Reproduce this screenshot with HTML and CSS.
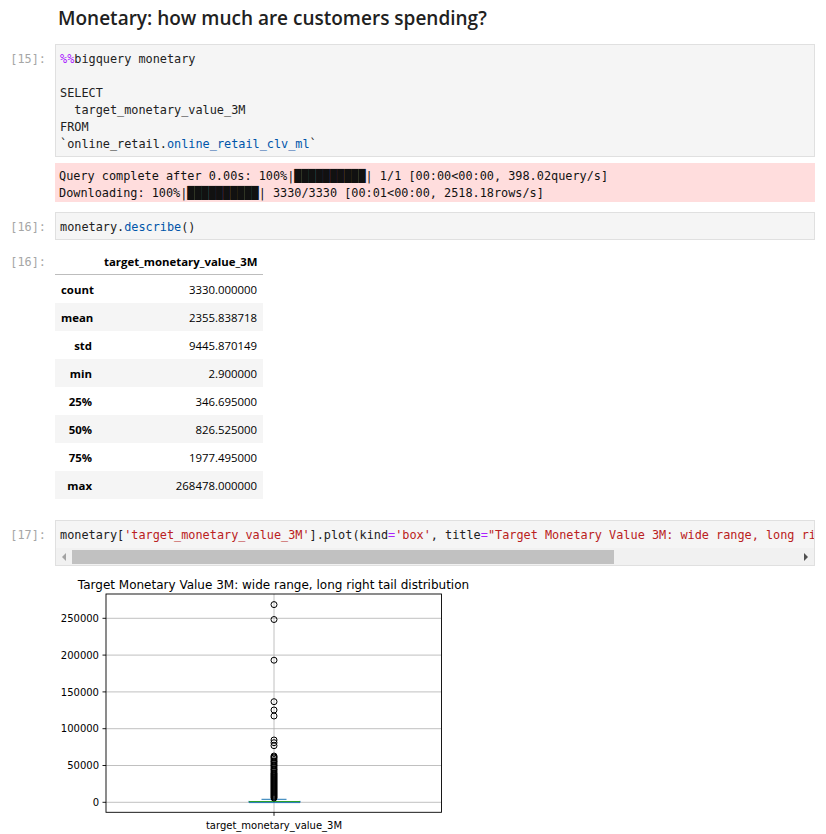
FILE: index.html
```html
<!DOCTYPE html>
<html>
<head>
<meta charset="utf-8">
<link rel="stylesheet" href="styles.css">
</head>
<body>
<div class="nb">
  <h2 class="title">Monetary: how much are customers spending?</h2>

  <div class="cell">
    <div class="row">
      <div class="prompt">[15]:</div>
      <div class="editor"><pre class="code"><span class="magic">%%</span>bigquery monetary

SELECT
  target_monetary_value_3M
FROM
`online_retail.<span class="prop">online_retail_clv_ml</span>`</pre></div>
    </div>
    <div class="row out">
      <div class="prompt"></div>
      <div class="stderr"><pre class="code errtext">Query complete after 0.00s: 100%|██████████| 1/1 [00:00&lt;00:00, 398.02query/s]
Downloading: 100%|██████████| 3330/3330 [00:01&lt;00:00, 2518.18rows/s]</pre></div>
    </div>
  </div>

  <div class="cell">
    <div class="row">
      <div class="prompt">[16]:</div>
      <div class="editor"><pre class="code">monetary.<span class="prop">describe</span>()</pre></div>
    </div>
    <div class="row out">
      <div class="prompt prompt-out">[16]:</div>
      <div class="result">
        <table class="df">
          <colgroup><col class="c-idx"><col class="c-val"></colgroup>
          <thead>
            <tr><th></th><th>target_monetary_value_3M</th></tr>
          </thead>
          <tbody>
            <tr><th>count</th><td>3330.000000</td></tr>
            <tr><th>mean</th><td>2355.838718</td></tr>
            <tr><th>std</th><td>9445.870149</td></tr>
            <tr><th>min</th><td>2.900000</td></tr>
            <tr><th>25%</th><td>346.695000</td></tr>
            <tr><th>50%</th><td>826.525000</td></tr>
            <tr><th>75%</th><td>1977.495000</td></tr>
            <tr><th>max</th><td>268478.000000</td></tr>
          </tbody>
        </table>
      </div>
    </div>
  </div>

  <div class="cell">
    <div class="row">
      <div class="prompt">[17]:</div>
      <div class="editor">
        <pre class="code code-last">monetary[<span class="str">'target_monetary_value_3M'</span>].plot(kind<span class="op">=</span><span class="str">'box'</span>, title<span class="op">=</span><span class="str">"Target Monetary Value 3M: wide range, long right tail distribution"</span>)</pre>
        <div class="hscroll">
          <div class="sbtn"><span class="arr-left"></span></div>
          <div class="thumb"></div>
          <div class="track-rest"></div>
          <div class="sbtn"><span class="arr-right"></span></div>
        </div>
      </div>
    </div>
    <div class="row out">
      <div class="prompt"></div>
      <svg class="plot" width="440" height="262" viewBox="55 572 440 262" xmlns="http://www.w3.org/2000/svg">
        <text class="ptitle" x="273.5" y="589" text-anchor="middle">Target Monetary Value 3M: wide range, long right tail distribution</text>
        <g class="grid">
          <line x1="106" x2="441.5" y1="802.3" y2="802.3"/>
          <line x1="106" x2="441.5" y1="765.5" y2="765.5"/>
          <line x1="106" x2="441.5" y1="728.7" y2="728.7"/>
          <line x1="106" x2="441.5" y1="691.9" y2="691.9"/>
          <line x1="106" x2="441.5" y1="655.1" y2="655.1"/>
          <line x1="106" x2="441.5" y1="618.3" y2="618.3"/>
          <line x1="274" x2="274" y1="594" y2="812.3"/>
        </g>
        <g class="boxp">
          <line class="blue" x1="274" x2="274" y1="801" y2="799.3"/>
          <line class="blue" x1="261.5" x2="286.5" y1="799.3" y2="799.3"/>
          <line class="blue" x1="249" x2="300" y1="802.6" y2="802.6"/>
          <line class="blue" x1="249" x2="249" y1="800.9" y2="802.6"/>
          <line class="blue" x1="300" x2="300" y1="800.9" y2="802.6"/>
          <line class="green" x1="249" x2="300" y1="801.5" y2="801.5"/>
        </g>
        <g class="fliers">
          <circle cx="274" cy="604.6" r="3"/>
          <circle cx="274" cy="619.5" r="3"/>
          <circle cx="274" cy="660.2" r="3"/>
          <circle cx="274" cy="701.7" r="3"/>
          <circle cx="274" cy="710" r="3"/>
          <circle cx="274" cy="716" r="3"/>
          <circle cx="274" cy="740" r="3"/>
          <circle cx="274" cy="742.7" r="3"/>
          <circle cx="274" cy="745.7" r="3"/>
          <circle cx="274" cy="756" r="3"/>
          <circle cx="274" cy="757" r="3"/>
          <circle cx="274" cy="758" r="3"/>
          <circle cx="274" cy="759.5" r="3"/>
          <circle cx="274" cy="761" r="3"/>
          <circle cx="274" cy="762" r="3"/>
          <circle cx="274" cy="763.5" r="3"/>
          <circle cx="274" cy="765" r="3"/>
          <circle cx="274" cy="766" r="3"/>
          <circle cx="274" cy="767.5" r="3"/>
          <circle cx="274" cy="769" r="3"/>
          <circle cx="274" cy="770" r="3"/>
          <circle cx="274" cy="771.5" r="3"/>
          <circle cx="274" cy="773" r="3"/>
          <circle cx="274" cy="774" r="3"/>
          <circle cx="274" cy="775" r="3"/>
          <circle cx="274" cy="776" r="3"/>
          <circle cx="274" cy="777" r="3"/>
          <circle cx="274" cy="778" r="3"/>
          <circle cx="274" cy="779" r="3"/>
          <circle cx="274" cy="780" r="3"/>
          <circle cx="274" cy="781" r="3"/>
          <circle cx="274" cy="782" r="3"/>
          <circle cx="274" cy="783" r="3"/>
          <circle cx="274" cy="784" r="3"/>
          <circle cx="274" cy="785" r="3"/>
          <circle cx="274" cy="786" r="3"/>
          <circle cx="274" cy="787" r="3"/>
          <circle cx="274" cy="788" r="3"/>
          <circle cx="274" cy="789" r="3"/>
          <circle cx="274" cy="790" r="3"/>
          <circle cx="274" cy="791" r="3"/>
          <circle cx="274" cy="792" r="3"/>
          <circle cx="274" cy="793" r="3"/>
          <circle cx="274" cy="794" r="3"/>
          <circle cx="274" cy="795" r="3"/>
          <circle cx="274" cy="796" r="3"/>
          <circle cx="274" cy="797" r="3"/>
          <circle cx="274" cy="798" r="3"/>
        </g>
        <rect class="spine" x="106" y="594" width="335.5" height="218.3"/>
        <g class="ticks">
          <line x1="102.5" x2="106" y1="802.3" y2="802.3"/>
          <line x1="102.5" x2="106" y1="765.5" y2="765.5"/>
          <line x1="102.5" x2="106" y1="728.7" y2="728.7"/>
          <line x1="102.5" x2="106" y1="691.9" y2="691.9"/>
          <line x1="102.5" x2="106" y1="655.1" y2="655.1"/>
          <line x1="102.5" x2="106" y1="618.3" y2="618.3"/>
          <line x1="274" x2="274" y1="812.3" y2="815.8"/>
        </g>
        <g class="ticklabels">
          <text x="99" y="805.9" text-anchor="end">0</text>
          <text x="99" y="769.1" text-anchor="end">50000</text>
          <text x="99" y="732.3" text-anchor="end">100000</text>
          <text x="99" y="695.5" text-anchor="end">150000</text>
          <text x="99" y="658.7" text-anchor="end">200000</text>
          <text x="99" y="621.9" text-anchor="end">250000</text>
          <text x="274" y="829" text-anchor="middle">target_monetary_value_3M</text>
        </g>
      </svg>
    </div>
  </div>
</div>
</body>
</html>
```

FILE: styles.css
```css
html, body {
  margin: 0;
  padding: 0;
  background: #ffffff;
  overflow: hidden;
}

body {
  width: 826px;
  height: 834px;
}

.nb {
  padding-right: 11px;
}

.title {
  font-family: "Open Sans", "Noto Sans", sans-serif;
  font-size: 19px;
  font-weight: 600;
  line-height: 26px;
  color: #212121;
  margin: 5px 0 13px 0;
  padding-left: 58px;
}

.cell {
  margin-bottom: 10px;
}

.row {
  display: flex;
  align-items: flex-start;
}

.row.out {
  margin-top: 6px;
}

.prompt {
  flex: none;
  width: 55px;
  box-sizing: border-box;
  padding: 7px 9px 0 0;
  text-align: right;
  font-family: "DejaVu Sans Mono", monospace;
  font-size: 11.85px;
  line-height: 17px;
  color: #a6a6a6;
}

.prompt-out {
  padding-top: 8px;
}

.editor {
  flex: 1;
  min-width: 0;
  background: #f5f5f5;
  border: 1px solid #e0e0e0;
}

.code {
  margin: 0;
  padding: 6px 4px 3px;
  font-family: "DejaVu Sans Mono", monospace;
  font-size: 11.85px;
  line-height: 17px;
  color: #212121;
  white-space: pre;
  overflow: hidden;
}

.code-last {
  padding-bottom: 4px;
}

.magic { color: #aa22ff; }
.prop { color: #0055aa; }
.str { color: #ba2121; }
.op { color: #aa22ff; }

.stderr {
  flex: 1;
  min-width: 0;
  background: #ffdddd;
}

.errtext {
  padding: 5px 4px 0;
  color: #111111;
}

/* horizontal scrollbar */
.hscroll {
  display: flex;
  align-items: center;
  height: 17px;
  background: #f1f1f1;
}

.sbtn {
  flex: none;
  width: 16px;
  height: 17px;
  display: flex;
  align-items: center;
  justify-content: center;
}

.arr-left {
  width: 0;
  height: 0;
  border-top: 4px solid transparent;
  border-bottom: 4px solid transparent;
  border-right: 4px solid #a3a3a3;
}

.arr-right {
  width: 0;
  height: 0;
  border-top: 4px solid transparent;
  border-bottom: 4px solid transparent;
  border-left: 4px solid #505050;
}

.thumb {
  flex: none;
  width: 542px;
  height: 14px;
  background: #c1c1c1;
}

.track-rest {
  flex: 1;
}

/* dataframe */
.result {
  flex: none;
}

.df {
  border-collapse: collapse;
  table-layout: fixed;
  width: 208px;
  margin: 1px 0 11px;
  font-family: "Open Sans", "Noto Sans", sans-serif;
  font-size: 11.4px;
  color: #000000;
}

.c-idx { width: 43px; }
.c-val { width: 165px; }

.df th,
.df td {
  padding: 7px 6px 5px;
  line-height: 16px;
  text-align: right;
  white-space: nowrap;
  font-weight: normal;
}

.df th {
  font-weight: bold;
}

.df thead th {
  padding-bottom: 4px;
  border-bottom: 1px solid #bdbdbd;
}

.df tbody tr:nth-child(even) {
  background: #f5f5f5;
}

/* plot */
.plot {
  display: block;
  flex: none;
}

.ptitle {
  font-family: "DejaVu Sans", sans-serif;
  font-size: 12px;
  fill: #000000;
}

.grid line {
  stroke: #b0b0b0;
  stroke-width: 0.8;
}

.spine {
  fill: none;
  stroke: #000000;
  stroke-width: 0.9;
}

.ticks line {
  stroke: #000000;
  stroke-width: 0.9;
}

.ticklabels text {
  font-family: "DejaVu Sans", sans-serif;
  font-size: 10px;
  fill: #000000;
}

.boxp .blue {
  stroke: #1f77b4;
  stroke-width: 1;
}

.boxp .green {
  stroke: #2ca02c;
  stroke-width: 1.2;
}

.fliers circle {
  fill: none;
  stroke: #000000;
  stroke-width: 1;
}
```
